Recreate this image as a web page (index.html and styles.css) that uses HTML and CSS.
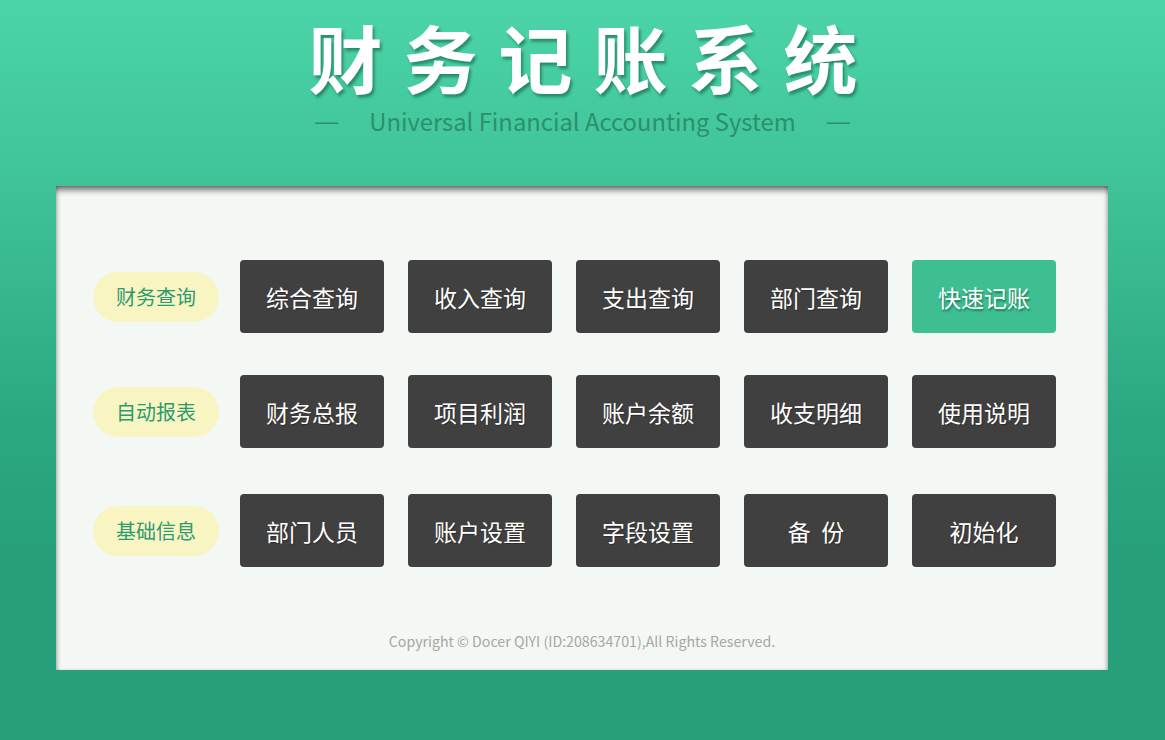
FILE: index.html
```html
<!DOCTYPE html>
<html lang="zh-CN">
<head>
<meta charset="utf-8">
<title>财务记账系统</title>
<link rel="stylesheet" href="styles.css">
</head>
<body>
<header class="header">
  <h1 class="title">财务记账系统</h1>
  <div class="subtitle"><span class="dash">—</span><span class="sub-text">Universal Financial Accounting System</span><span class="dash">—</span></div>
</header>
<main class="panel">
  <div class="rows">
    <div class="row">
      <div class="pill">财务查询</div>
      <div class="btn">综合查询</div>
      <div class="btn">收入查询</div>
      <div class="btn">支出查询</div>
      <div class="btn">部门查询</div>
      <div class="btn btn-green">快速记账</div>
    </div>
    <div class="row">
      <div class="pill">自动报表</div>
      <div class="btn">财务总报</div>
      <div class="btn">项目利润</div>
      <div class="btn">账户余额</div>
      <div class="btn">收支明细</div>
      <div class="btn">使用说明</div>
    </div>
    <div class="row row-last">
      <div class="pill">基础信息</div>
      <div class="btn">部门人员</div>
      <div class="btn">账户设置</div>
      <div class="btn">字段设置</div>
      <div class="btn">备&nbsp;&nbsp;份</div>
      <div class="btn">初始化</div>
    </div>
  </div>
  <footer class="copyright">Copyright © Docer QIYI (ID:208634701),All Rights Reserved.</footer>
</main>
</body>
</html>
```

FILE: styles.css
```css
html, body {
  margin: 0;
  padding: 0;
}
body {
  width: 1165px;
  height: 740px;
  overflow: hidden;
  background: linear-gradient(to bottom, #4cd4a9 0px, #3fc297 190px, #2ba882 420px, #279f7b 560px, #279f7b 740px);
  font-family: "Noto Sans CJK SC", "Noto Sans", sans-serif;
}
.header {
  display: flex;
  flex-direction: column;
  align-items: center;
  height: 186px;
}
.title {
  margin: 14px 0 0 22px;
  font-size: 74px;
  line-height: 84px;
  font-weight: 700;
  letter-spacing: 21px;
  color: #ffffff;
  text-shadow: 2px 3px 3px rgba(0, 60, 40, 0.45);
}
.subtitle {
  display: flex;
  align-items: center;
  gap: 31px;
  margin-top: 6px;
  color: #2c8f6d;
  font-size: 23.8px;
  line-height: 34px;
}
.dash {
  font-family: "Liberation Sans", sans-serif;
  font-size: 23px;
  line-height: 34px;
}
.sub-text {
  letter-spacing: 0;
}
.panel {
  margin-left: 56px;
  width: 1052px;
  height: 484px;
  background: #f3f8f5;
  box-shadow: inset 0 7px 6px -3px rgba(0, 0, 0, 0.55), inset 3px 0 4px -2px rgba(0, 0, 0, 0.25), inset -3px 0 4px -2px rgba(0, 0, 0, 0.25);
  display: flex;
  flex-direction: column;
  padding: 74px 0 0 37px;
  box-sizing: border-box;
}
.rows {
  display: flex;
  flex-direction: column;
  gap: 42px;
}
.row {
  display: flex;
  align-items: center;
  gap: 24px;
}
.row-last {
  margin-top: 4px;
}
.pill {
  width: 126px;
  height: 50px;
  margin-right: -3px;
  border-radius: 25px;
  background: #f8f5c2;
  color: #2e9a70;
  font-size: 20px;
  display: flex;
  align-items: center;
  justify-content: center;
}
.btn {
  width: 144px;
  height: 73px;
  border-radius: 4px;
  background: #404040;
  color: #ffffff;
  font-size: 23px;
  display: flex;
  align-items: center;
  justify-content: center;
  text-shadow: 1px 1px 1px rgba(0, 0, 0, 0.3);
}
.btn-green {
  background: #3dbf92;
  text-shadow: 1px 2px 2px rgba(0, 70, 50, 0.55);
}
.copyright {
  margin: 65px 0 0 -37px;
  text-align: center;
  color: #a8a6a4;
  font-size: 14.2px;
  line-height: 18px;
}
```
